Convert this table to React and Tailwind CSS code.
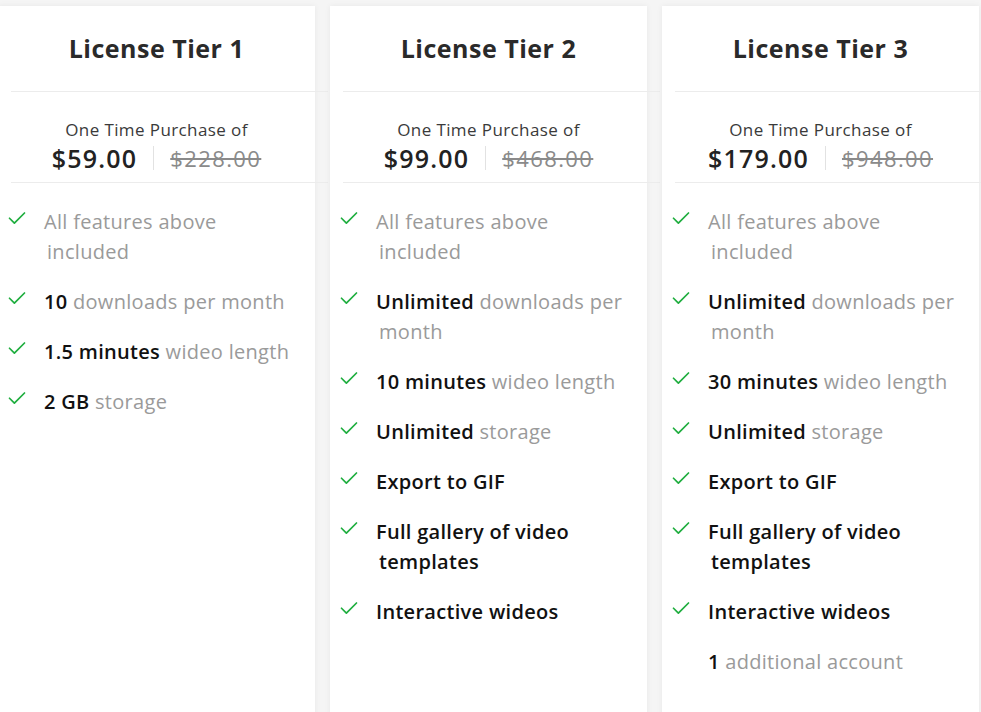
import React from "react";

const tiers = [
  {
    title: "License Tier 1",
    price: "$59.00",
    old: "$228.00",
    features: [
      { b: "", t: "All features above included", check: true },
      { b: "10", t: " downloads per month", check: true },
      { b: "1.5 minutes", t: " wideo length", check: true },
      { b: "2 GB", t: " storage", check: true },
    ],
  },
  {
    title: "License Tier 2",
    price: "$99.00",
    old: "$468.00",
    features: [
      { b: "", t: "All features above included", check: true },
      { b: "Unlimited", t: " downloads per month", check: true },
      { b: "10 minutes", t: " wideo length", check: true },
      { b: "Unlimited", t: " storage", check: true },
      { b: "Export to GIF", t: "", check: true },
      { b: "Full gallery of video templates", t: "", check: true },
      { b: "Interactive wideos", t: "", check: true },
    ],
  },
  {
    title: "License Tier 3",
    price: "$179.00",
    old: "$948.00",
    features: [
      { b: "", t: "All features above included", check: true },
      { b: "Unlimited", t: " downloads per month", check: true },
      { b: "30 minutes", t: " wideo length", check: true },
      { b: "Unlimited", t: " storage", check: true },
      { b: "Export to GIF", t: "", check: true },
      { b: "Full gallery of video templates", t: "", check: true },
      { b: "Interactive wideos", t: "", check: true },
      { b: "1", t: " additional account", check: false },
    ],
  },
];

function Check() {
  return (
    <svg width="18" height="18" viewBox="0 0 24 24" fill="none" stroke="#1fae3f" strokeWidth="2.3" strokeLinecap="round" strokeLinejoin="round">
      <path d="M22 4 8.5 17.5 2 11" />
    </svg>
  );
}

function Card({ tier }) {
  return (
    <div className="w-[317px] shrink-0 bg-white shadow-[0_0_6px_rgba(0,0,0,0.06)] min-h-[720px]">
      <div className="h-[85px] flex items-center justify-center text-[25px] font-bold tracking-[0.5px] text-[#2a2a2a]">
        {tier.title}
      </div>
      <div className="h-px w-full ml-[13px] bg-[#ececec]" />
      <div className="h-[90px] flex flex-col items-center pt-[27px]">
        <div className="text-[17px] leading-[22px] tracking-[0.4px] text-[#3a3a3a]">One Time Purchase of</div>
        <div className="flex items-center mt-[2px]">
          <span className="text-[25px] leading-[30px] font-semibold tracking-[1.2px] text-[#222]">{tier.price}</span>
          <span className="w-px h-[24px] bg-[#e2e2e2] mx-[16px]" />
          <span className="text-[22px] leading-[30px] tracking-[1.4px] text-[#8a8a8a] line-through">{tier.old}</span>
        </div>
      </div>
      <div className="h-px w-full ml-[13px] bg-[#ececec]" />
      <ul className="pt-[24px] pl-[10px] pr-[20px] flex flex-col gap-[20px]">
        {tier.features.map((f, i) => (
          <li key={i} className="flex">
            <div className="w-[18px] shrink-0 pt-[3px]">{f.check ? <Check /> : null}</div>
            <div className="ml-[18px] pl-[3px] indent-[-3px] text-[20px] leading-[30px] tracking-[0.3px] text-[#9a9a9a]">
              {f.b ? <span className="font-semibold text-[#111]">{f.b}</span> : null}
              {f.t}
            </div>
          </li>
        ))}
      </ul>
    </div>
  );
}

export default function App() {
  return (
    <div
      className="h-[712px] overflow-hidden bg-[#f5f5f5]"
      style={{ fontFamily: '"Open Sans", "Liberation Sans", sans-serif' }}
    >
      <div className="flex gap-[15px] pt-[6px] ml-[-2px]">
        {tiers.map((t) => (
          <Card key={t.title} tier={t} />
        ))}
      </div>
    </div>
  );
}
